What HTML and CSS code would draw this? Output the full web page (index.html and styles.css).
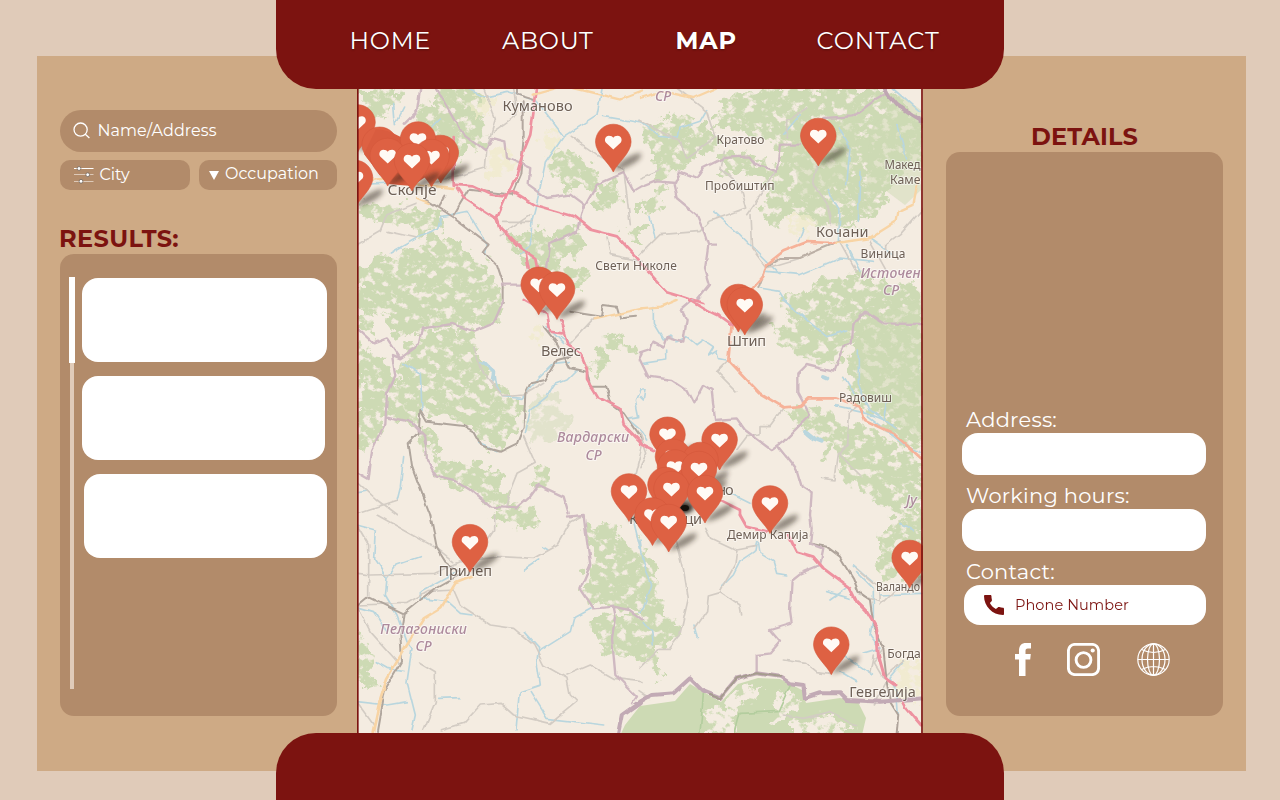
FILE: index.html
```html
<!DOCTYPE html>
<html lang="en">
<head>
<meta charset="utf-8">
<title>Map</title>
<link rel="stylesheet" href="styles.css">
</head>
<body>
<header class="topbar">
  <nav class="nav">
    <a class="nav-item home">HOME</a>
    <a class="nav-item about">ABOUT</a>
    <a class="nav-item map-link active">MAP</a>
    <a class="nav-item contact">CONTACT</a>
  </nav>
</header>
<main class="board">
  <section class="finder">
    <div class="search">
      <svg class="search-icon" viewBox="0 0 18 18"><circle cx="7.6" cy="7.6" r="6.6"/><path d="M12.3 12.3L16.4 16"/></svg>
      <span>Name/Address</span>
    </div>
    <div class="filters">
      <div class="filter city">
        <svg class="sliders" viewBox="0 0 20 18"><path d="M0 2.500H19.500" stroke="#fff"/><path d="M0 8.500H19.500M0 15.500H19.500" stroke="#ddc9b8"/><g fill="#fff" stroke="#6d6259" stroke-width=".8"><circle cx="5" cy="2.500" r="1.900"/><circle cx="13.700" cy="8.700" r="1.900"/><circle cx="7" cy="15.300" r="1.900"/></g></svg>
        <span>City</span>
      </div>
      <div class="filter occupation">
        <svg class="caret" viewBox="0 0 10 9"><path d="M0 0H10L5 9Z"/></svg>
        <span>Occupation</span>
      </div>
    </div>
    <h2 class="title results-title">RESULTS:</h2>
    <div class="results">
      <div class="scroll"><div class="thumb"></div></div>
      <div class="cards">
        <div class="card"></div>
        <div class="card short"></div>
        <div class="card short end"></div>
      </div>
    </div>
  </section>

  <svg class="map" viewBox="357 56 566 715">
    <defs>
      <filter id="forest" x="-5%" y="-5%" width="110%" height="110%">
        <feTurbulence type="fractalNoise" baseFrequency=".075" numOctaves="4" seed="8" result="n"/>
        <feDisplacementMap in="SourceGraphic" in2="n" scale="26" xChannelSelector="R" yChannelSelector="G" result="d"/>
        <feTurbulence type="fractalNoise" baseFrequency=".11 .13" numOctaves="4" seed="21"/>
        <feColorMatrix values="0 0 0 0 0  0 0 0 0 0  0 0 0 0 0  7 0 0 0 -2.250" result="m"/>
        <feComposite in="d" in2="m" operator="in"/>
        <feGaussianBlur stdDeviation=".65"/>
      </filter>
      <filter id="wobble" x="-5%" y="-5%" width="110%" height="110%">
        <feTurbulence type="fractalNoise" baseFrequency=".07" numOctaves="2" seed="3"/>
        <feDisplacementMap in="SourceGraphic" scale="5" xChannelSelector="R" yChannelSelector="G"/>
        <feGaussianBlur stdDeviation=".55"/>
      </filter>
      <filter id="soft" x="-100%" y="-100%" width="300%" height="300%"><feGaussianBlur stdDeviation="2.600"/></filter>
      <g id="pin">
        <path d="M0 29C4 22 14 13 27 11C31 15 20 23 8 27Z" fill="#2a2018" opacity=".5" filter="url(#soft)"/>
        <path d="M0 30C-4 21-17.800 11-17.800 0A17.800 17.800 0 0 1 17.800 0C17.800 11 4 21 0 30Z" fill="#de6143" stroke="#d4583b" stroke-width=".6"/>
        <path d="M0 7.500L-7.500.4C-9.300-2-8-6.300-4.500-6.300C-2-6.300-.8-5.500 0-4.300C.8-5.500 2-6.300 4.500-6.300C8-6.300 9.300-2 7.500.4Z" fill="#fffaf5"/>
      </g>
    </defs>
    <rect x="357" y="56" width="566" height="715" fill="#f4ece1"/>

    <g filter="url(#forest)" fill="#cddab4">
      <g transform="translate(357 88) scale(.33333)">
        <path d="M6 0H130L110 70L60 110L6 60ZM190 60L250 30L240 0H365L380 110L385 195L340 170L300 230L190 130ZM6 340L120 350L250 365L255 420L200 440L110 400L6 390ZM0 540L60 500L130 510L200 455L290 445L340 495L385 520L430 590V660H0ZM440 440L520 420L590 430L660 410L680 470L590 560L520 550ZM590 190L650 190L730 260L710 300L640 310L590 270ZM720 290L780 280L795 340L740 370L710 340ZM800 420H870V450H810ZM600 560L700 540L690 600L620 600Z"/>
      </g>
      <g transform="translate(640 88) scale(.33333)">
        <path d="M240 70L290 15L380 0H740L850 90V240L770 260L740 330L680 400L600 425L530 400L460 385L390 420L360 350L410 270L425 180L300 130L230 120ZM20 120L110 80L200 100L240 160L140 240L60 270L20 170ZM240 180L330 200L410 250L380 300L300 250L240 270ZM0 340L60 300L90 290L60 370L0 380ZM480 620L560 560L660 570L850 600V660H500Z"/>
      </g>
      <g transform="translate(357 300) scale(.33333)">
        <path d="M0 0H430L425 80L300 80L190 90L130 110L60 30L50 120L0 60ZM0 120L60 160L100 200L112 260L90 350L60 440L30 450L0 420ZM180 100L330 80L370 170L400 250L480 290L495 350L470 410L420 445L370 430L330 370L240 350L190 330L180 390L90 350L100 280L140 170ZM180 390L240 400L250 480L210 465ZM230 480L330 490L410 505L450 560L440 625L390 610L330 560L240 530ZM740 110L790 100L830 150L760 160L720 240L705 210ZM530 500H575V560H530ZM400 640L470 610L540 620L530 670H420Z"/>
        <path d="M520 310L600 280L640 350L620 400L560 430L510 420Z" opacity=".45"/>
      </g>
      <g transform="translate(640 300) scale(.33333)">
        <path d="M430-20H850V460L780 420L700 350L650 320L610 210L640 100L560 120L440 40ZM390 80L470 60L640 100L590 200L530 180L440 150ZM430 330L520 325L620 370L700 390L850 480V660L740 630L620 540L590 460L500 390ZM545 450L570 445L565 480L545 480Z"/>
      </g>
      <g transform="translate(357 515) scale(.33333)">
        <path d="M440-10H540L550 30L480 40ZM690 20L760 40L860 130V285L780 275L700 270L680 200L715 130L680 60ZM700 320L770 300H870V425L800 440L730 410ZM0 340L35 400L60 510L0 530Z"/>
      </g>
      <g transform="translate(640 515) scale(.33333)">
        <path d="M0 60L40 150L70 220L60 300L125 330L110 370L60 400L60 500L0 430ZM720 50L760 10L850 0V200L760 195L710 170Z"/>
      </g>
    </g>
    <g fill="#cddab4">
      <path d="M618 740L625 725L640 706L675 701L690 684L721 702L738 684L758 678L780 679L802 690L806 703L840 698L858 702L866 718L862 735Z"/>
      <path d="M865 205L885 190L905 205L921 190V110L900 95L870 130ZM870 320L921 300V440L890 415L868 395L850 360ZM790 130L860 120L850 180L800 200Z" opacity=".5"/>
    </g>
    <g fill="#f4ece1" filter="url(#forest)"><path d="M700 735L710 712L728 700L735 690L762 686L752 702L732 710L737 735ZM783 690L795 690L800 710L778 720L770 712ZM790 725L830 715L850 735H790Z"/></g>
    <g fill="#f0eccb" opacity=".7" filter="url(#forest)"><path d="M485 155L505 150L518 170L490 180ZM543 130L558 130L555 155L546 158ZM790 218L815 215L812 233L792 235ZM900 665L921 660V705L895 695ZM525 335L540 330V345ZM475 100L492 96V115H475Z"/></g>

    <g filter="url(#wobble)" fill="none" stroke-linejoin="round" stroke-linecap="round">
      <g transform="translate(357 88) scale(.33333)">
        <g stroke="#b9d6de" stroke-width="5"><path d="M330 0L380 25L450 10L540 40L620 145L720 80L735 0M620 145L565 225L545 320L525 400L520 470L490 500M740 85L855 105M110 50L115 110L140 60M250 90L210 130M100 495L180 450L245 420L255 385L330 370L390 470L385 500M0 290L100 285"/></g>
        <g stroke="#d3ccc4" stroke-width="5"><path d="M380 0L415 90L390 180L385 240L300 265L180 300M0 470L70 430L90 380L180 345M90 430L180 450M440 400L525 400M640 145L720 200L800 245L820 410M410 130L480 80L470 0M430 440L520 380M750 450L760 500L855 520"/></g>
        <g stroke="#b3a79f" stroke-width="6"><path d="M205 335L290 390L395 470L380 490L420 530L440 590L440 645M245 355L265 320M290 380L335 305L465 320L490 260L500 150L500 40M480 0V20L530 35"/></g>
        <g stroke="#cfb9c1" stroke-width="7"><path d="M240 0L280 70L320 140L385 190L405 150L445 160L450 210L520 240L515 290L570 330L640 320L680 350L660 430L580 465L570 540M680 360L720 290L800 255L830 310L855 295M190 0L180 70L140 110M435 590L500 590"/></g>
        <path d="M540 0L520 140L500 190L480 260L455 310L420 390L430 420L490 480L535 510L545 560M290 150V290L345 295L400 320L440 325L465 310L530 350L650 385L700 425L780 445L845 515M300 300L320 330L420 395M505 490L515 540" stroke="#ee92a0" stroke-width="8"/>
        <path d="M0 280L100 270L190 290L290 300M180 330L215 345M530 20L600 0M650 0L790 35L855 10" stroke="#f8d4a4" stroke-width="7"/>
      </g>
      <g transform="translate(640 88) scale(.33333)">
        <g stroke="#b9d6de" stroke-width="5"><path d="M0 100L60 145L115 150L120 120L180 100L200 65M220 370L300 440L370 510L420 560M595 120L630 180L620 290M660 250L655 400M565 305L600 370L595 460M30 385L45 450M380 550L480 560L600 510L700 520M360 600L420 610L440 645M620 470L660 550M690 450L760 500M770 110L800 210M760 0L840 70M480 80L430 140M475 460L490 420"/></g>
        <g stroke="#d3ccc4" stroke-width="5"><path d="M110 0L200 70L225 150L140 210L120 160L0 100M0 500L60 440L180 430L210 400L320 360L300 290L240 240L250 190M320 380L370 310L410 250M330 380L335 480L380 540L480 510M440 150V100L500 60M530 235L520 290L560 350L575 410M600 460L650 550M690 460L740 550M850 360L780 440L740 470M740 470L740 510M0 270L60 245"/></g>
        <path d="M600 460L550 480L480 510L420 510L380 535L355 600" stroke="#bcb0a6" stroke-width="6"/>
        <g stroke="#cfb9c1" stroke-width="7"><path d="M0 300L50 280L105 285L120 250L170 270L190 240L250 210L325 205L340 225L410 250L420 170L480 170M550 90L640 85L700 40L745 15M100 285L110 330L170 380L195 440L205 470H230M205 470L195 540L210 590L170 640"/></g>
        <path d="M735 0L745 20L770 50L820 85L845 100" stroke="#bfa6b2" stroke-width="12"/>
        <path d="M0 525L80 610L130 625L190 645" stroke="#ee92a0" stroke-width="8"/>
        <path d="M330 610L370 565L380 530L430 490L500 462L590 465" stroke="#f6b299" stroke-width="8"/>
        <path d="M590 465L690 450L770 400L775 370L820 350L835 270M0 30L70 10L160 30L230 0" stroke="#f8d4a4" stroke-width="7"/>
      </g>
      <g transform="translate(357 300) scale(.33333)">
        <g stroke="#b9d6de" stroke-width="5"><path d="M140 190L190 220L195 330M370 185L410 210L415 250L440 290L495 295L540 240L590 190L640 185M660 210L630 240L590 255L570 290L520 330L505 400M140 470L130 560L120 600M0 575L30 570M610 110L640 130M850 270L835 300L845 350L810 355L850 390M365 430L420 455M570 80L620 130"/><path d="M380 185L410 215L405 240" stroke-width="10"/></g>
        <g stroke="#d3ccc4" stroke-width="5"><path d="M350 140L375 210L415 260L440 290L500 285L560 250M500 410L535 490L480 520L460 570L450 625M0 545L60 600L120 645M120 600L0 640M640 130L710 55M855 440L830 540"/></g>
        <g stroke="#b0a69d" stroke-width="6"><path d="M190 330L210 365L320 378L350 395L375 440L430 455L480 430L500 380L505 280L520 250L565 240L600 180L640 170M190 330L185 400L155 430L165 500L195 580L220 645M560 80L600 130L640 205L690 215L700 260L745 260L760 310L800 340L855 420M640 35L735 50L740 15L780 20L790 55L840 50"/></g>
        <g stroke="#cfb9c1" stroke-width="7"><path d="M440 0L410 70L350 95L290 72L195 85L185 135L130 175L90 115L50 130L0 85M130 175L105 165L115 230L90 280L85 370L45 450L35 540L0 520M90 350L160 365L205 410L210 480L235 530L300 545L340 570L400 620L480 625L520 590L545 555L620 590L635 640M855 160L845 180"/></g>
        <path d="M500 0L570 40L580 95L615 100M610 60L630 130L670 160L690 210L690 240L720 290L790 325L800 375L855 430" stroke="#ee92a0" stroke-width="8"/>
        <path d="M710 58L855 25" stroke="#f8d4a4" stroke-width="7"/>
      </g>
      <g transform="translate(640 300) scale(.33333)">
        <g stroke="#b9d6de" stroke-width="5"><path d="M40 20L40 70L70 120L90 105L110 125L140 110L170 135L190 120L220 140L205 165L230 150L235 175L260 180M10 190L80 180L80 150M0 270H15L10 300L0 290M430 0L500 60L560 110L620 90M655 150L655 250L690 330L765 385M590 320L680 340L730 360L740 310M610 230L640 280M0 390L20 420M270 580L330 610M685 350L800 440L843 460"/><path d="M495 395L520 415L545 425M552 228L562 232" stroke-width="12"/></g>
        <g stroke="#d3ccc4" stroke-width="5"><path d="M265 180L230 215L290 275M435 320L390 380L360 380V405L320 410L290 450M650 320L625 340L620 430L595 465L585 540L545 535M600 465L665 530M0 400L20 460L0 500"/></g>
        <g stroke="#cfb9c1" stroke-width="7"><path d="M160 0L125 30L140 60L130 125L80 110L70 140L40 125L30 150L0 160M0 180L25 230L95 240L140 270L160 310L190 255L215 270L225 360L290 355L315 390L395 450L430 425L510 345L475 280L475 220L500 195L580 215L610 140L635 130L640 70L675 35L730 70L843 72M415 440L470 510L485 560L515 580L510 645"/></g>
        <path d="M275 75L265 180L360 280L430 322L480 318L505 295L590 295L660 320L675 360L760 400L843 475" stroke="#f6b299" stroke-width="8"/>
        <path d="M150 0L200 30L240 50L275 75M0 430L40 450M240 600L300 630V645" stroke="#ee92a0" stroke-width="8"/>
        <path d="M0 25L60 20L110 0" stroke="#f8d4a4" stroke-width="7"/>
      </g>
      <g transform="translate(357 515) scale(.33333)">
        <g stroke="#b9d6de" stroke-width="5"><path d="M0 30L55 45L50 130L90 190L85 240L120 300L150 380L165 400L150 500L175 600L165 645M190 125L120 150L90 190M300 170L190 230V250L270 260L310 295L345 300M0 275L50 290L90 350M500 165L545 135M555 95L570 105M505 355L545 400L540 440L550 510L490 530L480 645M545 410L640 350L650 310L705 280M520 530L570 610L740 630M245 550L310 548M55 440L90 460L140 470M0 560L90 570L150 560M825 0L850 100"/></g>
        <g stroke="#d3ccc4" stroke-width="5"><path d="M60 0L150 50L240 100L290 140M0 175L40 180L230 175L310 140L430 125L530 130L600 90L640 20L680 0M0 30L35 90V240M410 0L410 50L370 110M0 270L150 265L210 230L290 225L310 270L400 330L470 340L530 390L560 450L630 490L640 540L660 560L580 625L470 600L430 565L370 570L320 625L250 645M630 480L700 450L770 490L855 500M185 440L235 470V560L200 645M0 270L40 350L130 450M0 560L50 630"/></g>
        <g stroke="#b0a69d" stroke-width="6"><path d="M220 0L240 100L265 140L305 170M310 180L230 225L140 298L30 245L0 270M140 298L130 360L135 440L80 530L60 645"/></g>
        <g stroke="#cfb9c1" stroke-width="7"><path d="M630 5L680 0L690 80L700 150L670 220L710 280L770 275L775 300L765 370L775 480L840 545L825 565M770 275L820 285L855 310"/></g>
        <path d="M345 185L295 205L250 280L200 310L150 390L90 490L65 570L45 660" stroke="#f8d4a4" stroke-width="8"/>
      </g>
      <g transform="translate(640 515) scale(.33333)">
        <g stroke="#b9d6de" stroke-width="5"><path d="M350 80L345 110L300 140L280 180L245 215M355 80L360 115L400 140L410 175L440 180M0 75L10 140L35 210L10 280L0 290M10 320L35 350L40 390M165 330L175 370M560 230L630 250M620 220L570 255M650 170L700 220V310L690 360L720 400L670 415M610 420L640 440L700 480M790 440L750 490L770 530L775 600M720 240L843 235M600 470L650 500M640 150L700 200M780 25L820 45"/></g>
        <g stroke="#d3ccc4" stroke-width="5"><path d="M110 80L130 160L145 250L120 360L90 400L60 400L0 460M200 40L215 70L290 105L345 95M290 105L285 150L240 230L205 240L200 290L165 340M240 230L300 270L305 300M430 435L500 445L530 470L570 475M650 160L720 220L720 260L660 240M770 220L720 270M0 530L30 550M430 600L490 610L570 590L650 630M690 470L700 420M730 400L700 440L730 490L790 440M740 500L700 570"/></g>
        <g stroke="#aea39a" stroke-width="6"><path d="M510 85L560 95L600 125L640 190L655 230L690 255L700 330L730 400L740 500L750 560L775 600L770 655"/></g>
        <g stroke="#cfb9c1" stroke-width="7"><path d="M510 0L515 40L510 85L550 100L540 150L480 175L455 195L450 290L455 325L390 345L420 380L390 415L350 420V475"/></g>
        <path d="M0 560L35 540L100 535L150 490L190 530L240 550L290 490L350 475L420 485L450 505L490 510L495 550L540 535L600 535L620 555L720 560L850 550" stroke="#c2aab5" stroke-width="12"/>
        <path d="M210 540L240 550L290 490L350 475L420 485" stroke="#a59c8e" stroke-width="6"/>
        <path d="M190 540L180 655M410 590L300 595L285 655M450 510L415 590" stroke="#b3cd9e" stroke-width="5"/>
        <path d="M300 0L320 35L380 50M445 60L470 110L520 125L550 160L630 220L650 260L680 290L710 340L715 420L735 490L765 510M790 560L800 580L843 630" stroke="#ee92a0" stroke-width="9"/>
      </g>
      <path d="M619 735L623 715L640 703" stroke="#c2aab5" stroke-width="4"/>
    </g>

    <g class="town">
      <text class="big" x="502.500" y="111" textLength="70">Куманово</text>
      <text class="big" x="387.500" y="195" textLength="49" lengthAdjust="spacingAndGlyphs">Скопје</text>
      <text x="595.300" y="270" textLength="81.500">Свети Николе</text>
      <text x="716.500" y="143.500" textLength="48">Кратово</text>
      <text x="705" y="190" textLength="69.500">Пробиштип</text>
      <text class="big" x="816" y="237" textLength="52.500">Кочани</text>
      <text x="860.500" y="258" textLength="45">Виница</text>
      <text x="884.500" y="169" textLength="36" lengthAdjust="spacingAndGlyphs">Макед</text>
      <text x="890" y="184" textLength="30.500" lengthAdjust="spacingAndGlyphs">Каме</text>
      <text class="big" x="541" y="356" textLength="40">Велес</text>
      <text class="big" x="727" y="345.500" textLength="39">Штип</text>
      <text x="839" y="402" textLength="53">Радовиш</text>
      <text class="big" x="675" y="494.500" textLength="58.500">Неготино</text>
      <text class="big" x="629" y="524" textLength="73">Кавадарци</text>
      <text class="big" x="438.500" y="576" textLength="53.500">Прилеп</text>
      <text x="727" y="539" textLength="81.500">Демир Капија</text>
      <text x="876" y="590.500" textLength="44" lengthAdjust="spacingAndGlyphs">Валандо</text>
      <text x="887.300" y="658" textLength="33.500" lengthAdjust="spacingAndGlyphs">Богда</text>
      <text class="big" x="849.300" y="697" textLength="66.500">Гевгелија</text>
    </g>
    <g class="region">
      <text x="655" y="100.500">СР</text>
      <text x="860.500" y="277.500" textLength="60">Источен</text>
      <text x="883" y="294.800">СР</text>
      <text x="557" y="442" textLength="72">Вардарски</text>
      <text x="585.500" y="459.800">СР</text>
      <text x="906" y="505">Ју</text>
      <text x="380.300" y="633.500" textLength="86.500">Пелагониски</text>
      <text x="415.500" y="651">СР</text>
    </g>

    <g>
      <ellipse cx="684" cy="508" rx="8" ry="4" filter="url(#soft)"/>
      <ellipse cx="685" cy="508" rx="4" ry="3"/>
      <use href="#pin" x="357.500" y="122.500"/><use href="#pin" x="355" y="178"/>
      <use href="#pin" x="379.700" y="144.800"/><use href="#pin" x="440.800" y="153"/>
      <path d="M376 129C392 130 402 138 420 148C430 150 440 160 436 170L412 186L388 184L364 154Z" fill="#d95c3f"/>
      <use href="#pin" x="418" y="139.500"/><use href="#pin" x="431.500" y="157"/>
      <path d="M396 150C404 145 418 145 428 150L420 165H400Z" fill="#db5e41"/>
      <use href="#pin" x="387.700" y="156"/><use href="#pin" x="412" y="161"/>
      <use href="#pin" x="613.300" y="142"/><use href="#pin" x="818.300" y="136"/>
      <use href="#pin" x="538.700" y="284.800"/><use href="#pin" x="557" y="289.500"/>
      <use href="#pin" x="738.300" y="302"/><use href="#pin" x="744.800" y="305"/>
      <use href="#pin" x="667.500" y="434.800"/><use href="#pin" x="719.600" y="440"/>
      <use href="#pin" x="673" y="456.800"/><use href="#pin" x="700.500" y="460"/>
      <use href="#pin" x="675" y="467.500"/><use href="#pin" x="699" y="469"/>
      <use href="#pin" x="665.500" y="485"/><use href="#pin" x="671.500" y="489"/>
      <use href="#pin" x="629" y="491.500"/><use href="#pin" x="705" y="493"/>
      <use href="#pin" x="770" y="503.500"/><use href="#pin" x="652.500" y="515.500"/>
      <use href="#pin" x="668.700" y="522"/><use href="#pin" x="470" y="542.200"/>
      <use href="#pin" x="909.700" y="558"/><use href="#pin" x="831.300" y="644.700"/>
    </g>
    <path d="M357.800 56V771M922 56V771" stroke="#7c1310" stroke-width="1.700"/>
  </svg>

  <section class="details">
    <h2 class="title details-title">DETAILS</h2>
    <div class="detail-box">
      <div class="label address">Address:</div>
      <div class="field"></div>
      <div class="label hours">Working hours:</div>
      <div class="field"></div>
      <div class="label reach">Contact:</div>
      <div class="field phone">
        <svg class="phone-icon" viewBox="3 3 18 18"><path d="M8.300 10.300c1.200 2.300 3 4.200 5.400 5.400l1.700-1.500c.4-.4.900-.5 1.400-.3 1 .3 2.100.5 3.200.5.600 0 1 .4 1 1V20c0 .55-.4 1-1 1-9.390 0-17-7.610-17-17 0-.55.450-1 1-1h4.700c.6 0 1 .4 1 1 0 1.150.1 2.200.4 3.200.2.500 0 1-.3 1.400z"/></svg>
        <span>Phone Number</span>
      </div>
      <div class="social">
        <svg class="fb" viewBox="0 0 16 33"><path d="M4 33V16.500H0V11H4V8C4 2.500 6.500 0 11 0H16V5.600H12.800C11 5.600 10.500 6.500 10.500 8.200V11H15.800L15.200 16.500H10.500V33Z"/></svg>
        <svg class="ig" viewBox="0 0 33 33"><rect x="1.400" y="1.400" width="30.200" height="30.200" rx="6.500"/><circle cx="16.500" cy="17" r="7.400"/><circle class="dot" cx="25.700" cy="7.500" r="2.100"/></svg>
        <svg class="globe" viewBox="0 0 33 33"><circle cx="16.500" cy="16.500" r="15.700"/><ellipse cx="16.500" cy="16.500" rx="6" ry="15.700"/><ellipse cx="16.500" cy="16.500" rx="11.500" ry="15.700"/><path d="M16.500.8V32.200M.8 16.500H32.200M4.500 6.500Q16.500 12.500 28.500 6.500M4.500 26.500Q16.500 20.500 28.500 26.500"/></svg>
      </div>
    </div>
  </section>
</main>
<footer class="bottombar"></footer>
</body>
</html>
```
FILE: styles.css
```css
* { box-sizing: border-box; }
body {
  margin: 0;
  width: 1280px;
  height: 800px;
  overflow: hidden;
  position: relative;
  padding: 56px 34px 29px 37px;
  background: #e0cbb9;
  font-family: "Montserrat", "Inter", "Open Sans", sans-serif;
  color: #fff;
}
svg { display: block; flex: none; }
.topbar, .bottombar {
  position: absolute;
  left: 276px;
  width: 728px;
  background: #7c1310;
  z-index: 1;
}
.topbar { top: 0; height: 89px; border-radius: 0 0 40px 40px; }
.bottombar { bottom: 0; height: 67px; border-radius: 40px 40px 0 0; }
.nav {
  display: flex;
  height: 81px;
  align-items: center;
  padding-left: 73.500px;
  font-size: 24px;
  font-weight: 400;
  text-shadow: 0 1px 2px rgba(0, 0, 0, .35);
}
.nav-item { white-space: nowrap; letter-spacing: .75px; }
.home { width: 152.500px; }
.about { width: 173.500px; }
.map-link { width: 141px; }
.contact { letter-spacing: 1px; }
.active { font-weight: 700; letter-spacing: .8px; }

.board {
  display: flex;
  height: 715px;
  background: #ceaa85;
  padding: 0 23px;
}
.finder { width: 277px; margin-right: 20px; padding-top: 54px; }
.search {
  height: 42px;
  border-radius: 21px;
  background: #b28b6a;
  display: flex;
  align-items: center;
  padding: 0 0 1px 13px;
  font-size: 16px;
  letter-spacing: .05px;
}
.search-icon { width: 18px; height: 18px; margin: 1px 6.500px 0 0; fill: none; stroke: #fff; stroke-width: 1.300; }
.filters { display: flex; gap: 9px; margin-top: 8px; font-size: 16px; }
.filter { height: 30px; border-radius: 10px; background: #b28b6a; display: flex; align-items: center; }
.city { width: 130px; padding: 0 0 1px 14px; }
.sliders { width: 20px; height: 18px; margin: 1px 5.500px 0 0; }
.occupation { width: 138px; padding: 0 0 3px 10px; }
.caret { width: 10px; height: 9px; margin: 3px 6px 0 0; fill: #fff; }
.title { margin: 0; color: #7c1310; font-size: 24px; line-height: 30px; font-weight: 700; white-space: nowrap; }
.results-title { margin: 34px 0 0 -1px; letter-spacing: .4px; }
.results {
  height: 462px;
  border-radius: 14px;
  background: #b28b6a;
  padding: 24px 10px 0 9px;
  display: flex;
}
.scroll {
  width: 6px;
  height: 412px;
  margin-top: -1px;
  background: linear-gradient(90deg, transparent 1px, #e0cbb9 1px, #e0cbb9 5px, transparent 5px);
}
.thumb { height: 86px; background: #fff; }
.cards { width: 245px; margin-left: 7px; display: flex; flex-direction: column; gap: 14px; }
.card { height: 84px; border-radius: 16px; background: #fff; }
.short { width: 243px; }
.end { align-self: flex-end; }

.map { width: 566px; height: 715px; }
.map text { font-family: "Noto Sans", sans-serif; paint-order: stroke; stroke: rgba(255, 255, 255, .55); stroke-width: 2px; stroke-linejoin: round; }
.map .town { font-size: 12px; fill: #6e6056; }
.map .town .big { font-size: 14.500px; }
.map .region { font-size: 14px; font-style: italic; font-weight: 500; fill: #ad8a9c; }

.details { width: 277px; margin-left: 23px; padding-top: 66px; }
.details-title { text-align: center; letter-spacing: .15px; }
.detail-box { height: 564px; border-radius: 14px; background: #b28b6a; padding: 254px 17px 0 16px; }
.label { font-size: 21px; font-weight: 400; line-height: 27px; padding-left: 4px; white-space: nowrap; letter-spacing: .23px; }
.hours { margin-top: 7px; }
.reach { margin-top: 7px; }
.field { height: 42px; border-radius: 16px; background: #fff; }
.phone {
  height: 39.500px;
  margin-left: 2px;
  display: flex;
  align-items: center;
  padding-left: 20px;
  font-size: 14.500px;
  letter-spacing: .08px;
  color: #7c1310;
}
.phone-icon { width: 20px; height: 20px; margin-right: 11px; fill: #7c1310; }
.social { display: flex; padding: 18px 0 0 53px; fill: #fff; }
.fb { width: 16px; height: 33px; margin-right: 36px; }
.ig { width: 33px; height: 33px; margin-right: 37px; fill: none; stroke: #fff; stroke-width: 2.900; }
.ig .dot { fill: #fff; stroke: none; }
.globe { width: 33px; height: 33px; fill: none; stroke: #fff; stroke-width: 1.200; }
```
